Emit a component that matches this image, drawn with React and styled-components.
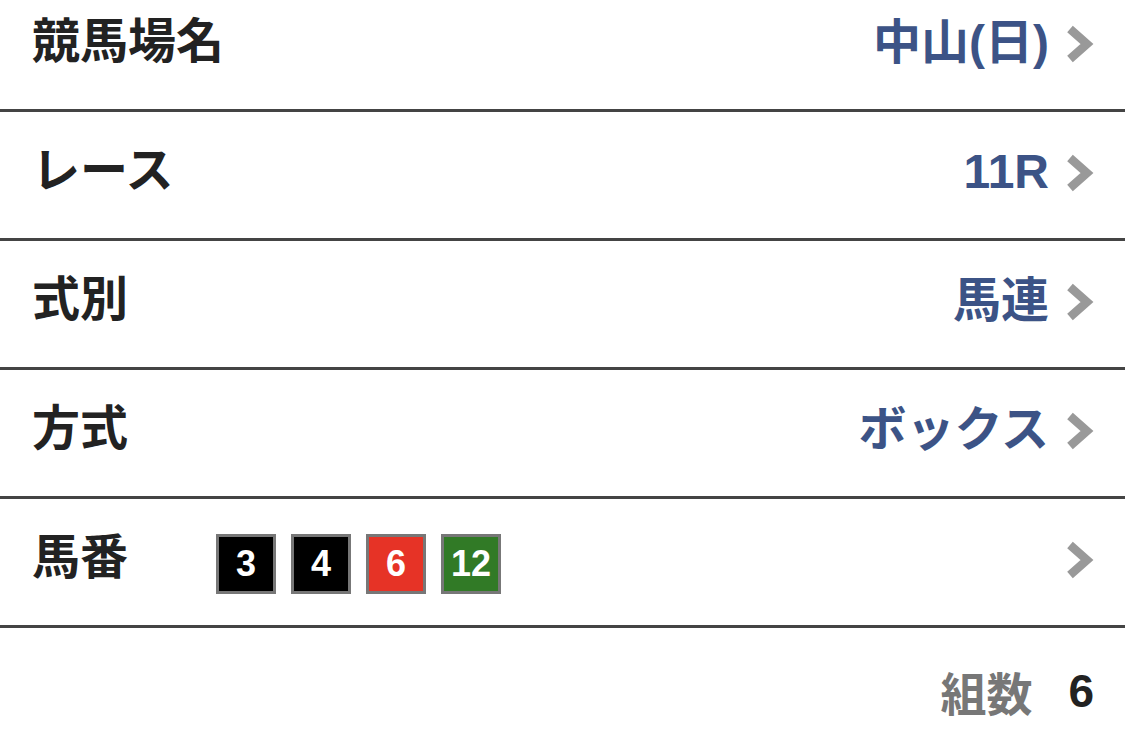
import React from 'react'
import styled, { createGlobalStyle } from 'styled-components'

const GlobalStyle = createGlobalStyle`
    html, body {
        margin: 0;
        padding: 0;
        background: #fff;
        overflow: hidden;
    }
    body {
        font-family: "Liberation Sans", "Noto Sans CJK JP", sans-serif;
        font-weight: bold;
        color: #222;
    }
`

const Container = styled.div`
    width: 1125px;
    height: 742px;
    margin-top: -17px;
`

const Row = styled.div`
    display: flex;
    align-items: center;
    height: 126px;
    padding: 0 31px 0 32px;
    border-bottom: 3px solid #444;
`

const Label = styled.div`
    font-size: 48px;
    line-height: 1.2;
    padding-bottom: 8px;
    color: #222;
    min-width: 184px;
    white-space: nowrap;
`

const Value = styled.div`
    margin-left: auto;
    font-size: 48px;
    line-height: 1.2;
    padding-bottom: 6px;
    color: #3c5386;
    padding-right: 17px;
    white-space: nowrap;
`

const Badges = styled.div`
    display: flex;
    gap: 15px;
    margin-top: 4px;
`

const Badge = styled.div`
    box-sizing: border-box;
    width: 60px;
    height: 60px;
    display: flex;
    align-items: center;
    justify-content: center;
    border: 3px solid #777;
    background: ${p => p.bg};
    color: #fff;
    font-size: 36px;
    font-family: "Liberation Sans", sans-serif;
`

const Spacer = styled.div`
    margin-left: auto;
`

const ChevronWrap = styled.div`
    display: flex;
    margin-bottom: 4px;
`

const Footer = styled.div`
    display: flex;
    justify-content: flex-end;
    align-items: center;
    height: 126px;
    padding-right: 31px;
    font-size: 46px;
`

const FooterLabel = styled.span`
    color: #777;
    margin-right: 36px;
`

const FooterCount = styled.span`
    color: #222;
    font-size: 46px;
`

const Chevron = () => (
    <ChevronWrap>
        <svg width="28" height="38" viewBox="0 0 28 38">
            <polyline points="4,4 21,19 4,34" fill="none" stroke="#999" strokeWidth="8.5" strokeLinejoin="miter" />
        </svg>
    </ChevronWrap>
)

const rows = [
    { label: '競馬場名', value: '中山(日)' },
    { label: 'レース', value: '11R' },
    { label: '式別', value: '馬連' },
    { label: '方式', value: 'ボックス' },
]

const horses = [
    { no: 3, bg: '#000' },
    { no: 4, bg: '#000' },
    { no: 6, bg: '#e63326' },
    { no: 12, bg: '#317a26' },
]

export default function App() {
    return (
        <Container>
            <GlobalStyle />
            {rows.map(r => (
                <Row key={r.label}>
                    <Label>{r.label}</Label>
                    <Value>{r.value}</Value>
                    <Chevron />
                </Row>
            ))}
            <Row>
                <Label>馬番</Label>
                <Badges>
                    {horses.map(h => (
                        <Badge key={h.no} bg={h.bg}>{h.no}</Badge>
                    ))}
                </Badges>
                <Spacer />
                <Chevron />
            </Row>
            <Footer>
                <FooterLabel>組数</FooterLabel>
                <FooterCount>6</FooterCount>
            </Footer>
        </Container>
    )
}
